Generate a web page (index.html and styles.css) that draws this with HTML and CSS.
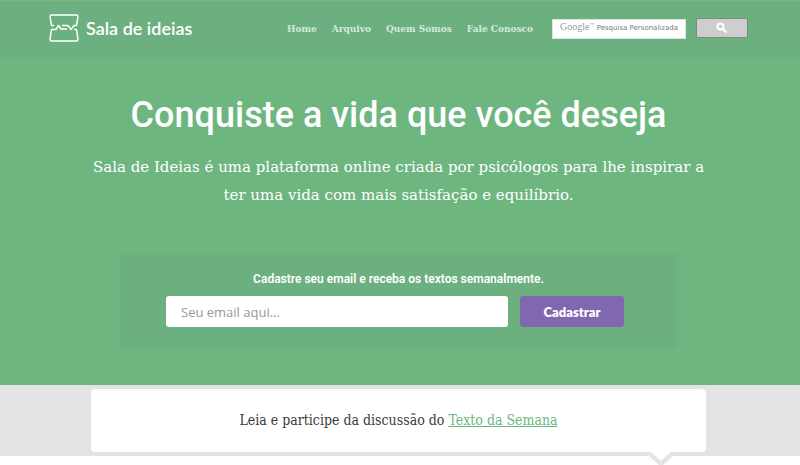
FILE: index.html
```html
<!DOCTYPE html>
<html lang="pt-BR">
<head>
<meta charset="utf-8">
<meta name="viewport" content="width=device-width, initial-scale=1">
<title>Sala de ideias</title>
<link rel="stylesheet" href="styles.css">
</head>
<body>
<header class="topbar">
  <a class="brand" href="#">
    <svg class="brand-icon" viewBox="0 0 30 28" aria-hidden="true">
      <path d="M5 11.500H2.500L1 2.500Q1 1 2.500 1H27.500Q29 1 29 2.500L27.500 11.500H25L22 15.500L19 11.500H13M18 15H12L9.500 11.500L7 15.500H2.500L1 25.500Q1 27 2.500 27H27.500Q29 27 29 25.500L27.500 15.500H25"/>
    </svg>
    <span>Sala de ideias</span>
  </a>
  <nav class="nav">
    <a href="#">Home</a>
    <a href="#">Arquivo</a>
    <a href="#">Quem Somos</a>
    <a href="#">Fale Conosco</a>
  </nav>
  <form class="search">
    <label class="search-field">
      <span class="search-hint"><span class="google">Google</span><span class="tm">™</span> Pesquisa Personalizada</span>
      <input type="text" aria-label="Pesquisa Personalizada">
    </label>
    <button type="submit" aria-label="Pesquisar">
      <svg viewBox="0 0 12 12" aria-hidden="true"><circle cx="4.500" cy="4.500" r="3"/><path d="M7 7L10.500 10.500"/></svg>
    </button>
  </form>
</header>
<main>
  <section class="hero">
    <h1>Conquiste a vida que você deseja</h1>
    <p class="lead">Sala de Ideias é uma plataforma online criada por psicólogos para lhe inspirar a ter uma vida com mais satisfação e equilíbrio.</p>
    <form class="signup">
      <label for="email">Cadastre seu email e receba os textos semanalmente.</label>
      <div class="signup-row">
        <input id="email" type="email" placeholder="Seu email aqui...">
        <button type="submit">Cadastrar</button>
      </div>
    </form>
  </section>
  <section class="weekly">
    <div class="card">
      <p>Leia e participe da discussão do <a href="#">Texto da Semana</a></p>
      <svg class="pointer" viewBox="0 0 26 13" aria-hidden="true"><path class="edge" d="M0 3L3 0H23L26 3L15 13H11Z"/><path class="fill" d="M3 0H23L13 9Z"/></svg>
    </div>
  </section>
</main>
</body>
</html>
```
FILE: styles.css
```css
* { box-sizing: border-box; }

body {
  min-height: 100vh;
  margin: 0;
  background: #fff;
  color: #403a3a;
  font-family: Roboto, sans-serif;
}

h1, p { margin: 0; }

.topbar {
  display: flex;
  align-items: center;
  height: 58px;
  padding: 0 52px 3px 49px;
  background: #6db080;
  border-top: 1px solid #73b688;
}

.brand {
  display: flex;
  align-items: center;
  gap: 7px;
  color: #fff;
  font: 600 18px Lato, sans-serif;
  text-decoration: none;
  white-space: nowrap;
}

.brand-icon {
  width: 30px;
  height: 28px;
  fill: none;
  stroke: #fff;
  stroke-width: 1.5;
  stroke-linejoin: round;
}

.nav {
  display: flex;
  gap: 15px;
  margin-left: auto;
  font: 700 10px "Roboto Slab", "DejaVu Serif Condensed", "DejaVu Serif", serif;
  white-space: nowrap;
}

.nav a {
  color: #d3ebd9;
  text-decoration: none;
}

.search {
  display: flex;
  gap: 10px;
  margin-left: 19px;
}

.search-field {
  position: relative;
  width: 134px;
  height: 20px;
}

.search-field input {
  width: 100%;
  height: 100%;
  padding: 0 8px;
  background: #fff;
  border: 1px solid #d9e6dc;
}

.search-hint {
  position: absolute;
  inset: 0 0 0 8px;
  color: #777;
  font: 7px/20px "DejaVu Sans", sans-serif;
  white-space: nowrap;
  pointer-events: none;
}

.google {
  color: #999;
  font: 10px "Liberation Serif", serif;
}

.tm { font-size: 5px; vertical-align: top; line-height: 15px; }

.search button {
  display: grid;
  place-items: center;
  width: 52px;
  height: 20px;
  padding: 0;
  background: #cecece;
  border: 1px solid #858585;
  border-radius: 2px;
}

.search svg {
  width: 12px;
  height: 12px;
  fill: none;
  stroke: #fff;
  stroke-width: 2;
}

.hero {
  padding: 34px 123px 36px 120px;
  background: #6eb67f;
  color: #fff;
  text-align: center;
}

h1 {
  font-size: 36px;
  font-weight: 500;
  line-height: 46px;
}

.lead {
  margin: 15px -32px 0;
  font: 15px/28px "Roboto Slab", "DejaVu Serif", serif;
}

.signup {
  margin-top: 44px;
  padding: 17px 46px 22px;
  background: #6db080;
  border-radius: 4px;
}

.signup label {
  display: block;
  font-size: 12px;
  font-weight: 600;
  line-height: 18px;
}

.signup-row {
  display: flex;
  gap: 12px;
  margin: 8px 7px 0 0;
}

.signup-row input,
.signup-row button {
  height: 31px;
  border: 0;
  border-radius: 3px;
  font: 500 13px "Open Sans", sans-serif;
}

.signup-row input {
  flex: 1;
  min-width: 0;
  padding: 0 15px;
  background: #fff;
}

.signup-row input::placeholder { color: #999; }

.signup-row button {
  width: 104px;
  background: #8068b0;
  color: #fff;
  font: 800 13px Lato, sans-serif;
}

.weekly {
  padding: 4px 94px 4px 91px;
  background: #e4e4e4;
}

.card {
  position: relative;
  padding: 20px;
  background: #fff;
  border-radius: 4px;
  font: 500 14px/23px "Roboto Slab", "DejaVu Serif Condensed", "DejaVu Serif", serif;
  text-align: center;
}

.card a { color: #6eb67f; }

.pointer {
  position: absolute;
  top: 100%;
  right: 32px;
  width: 26px;
  height: 13px;
}

.edge { fill: #e4e4e4; }
.fill { fill: #fff; }
```
